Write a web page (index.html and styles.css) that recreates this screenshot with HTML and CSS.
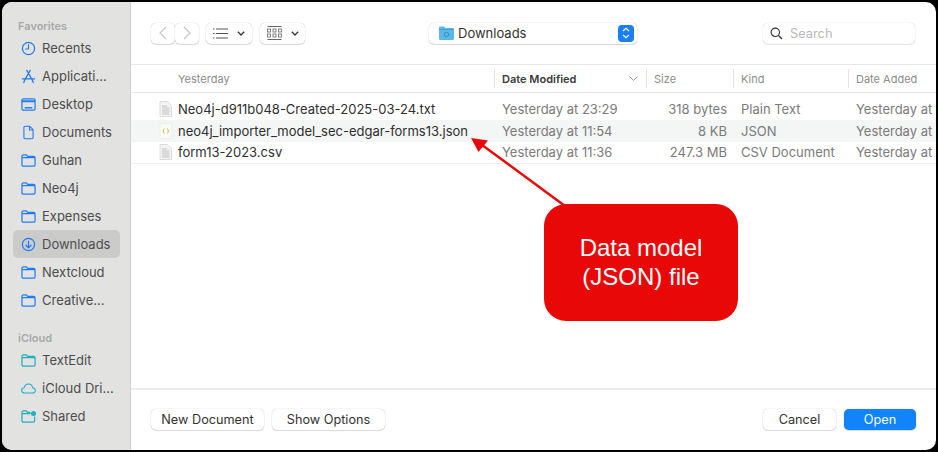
FILE: index.html
```html
<!DOCTYPE html>
<html lang="en">
<head>
    <meta charset="UTF-8">
    <meta name="viewport" content="width=device-width, initial-scale=1.0">
    <title>Open</title>
    <link rel="stylesheet" href="styles.css">
</head>
<body>
    <svg width="0" height="0" class="defs">
        <symbol id="folder" viewBox="0 0 16 14"><path d="M1 4V2.600C1 1.700 1.600 1 2.500 1H5.600L7.200 2.700H13.500C14.400 2.700 15 3.300 15 4.200V11.500C15 12.400 14.400 13 13.500 13H2.500C1.600 13 1 12.400 1 11.500V4H15" fill="none" stroke="currentColor" stroke-width="1.300"/></symbol>
        <symbol id="doc" viewBox="0 0 14 18"><path d="M3 1.500H8.500L12.500 5.700V15C12.500 16 11.900 16.500 11 16.500H3C2.100 16.500 1.500 16 1.500 15V3C1.500 2 2.100 1.500 3 1.500ZM8.300 1.700V5.900H12.300" fill="none" stroke="currentColor" stroke-width="1.300"/></symbol>
        <symbol id="filedoc" viewBox="0 0 13 16"><path d="M1 .5H8.500L12.500 4.500V15.500H1Z" fill="#f4f4f4" stroke="#dcdcdc"/><path d="M3 5H8M3 7H10.500M3 9H10.500M3 11H10.500M3 13H10.500" stroke="#b5b5b5" stroke-width=".8"/></symbol>
    </svg>

    <div class="window">
        <aside class="sidebar">
            <div class="side-title">Favorites</div>
            <div class="side-item">
                <svg class="side-icon" viewBox="0 0 16 16"><circle cx="8" cy="8" r="6.500" fill="none" stroke="currentColor" stroke-width="1.300"/><path d="M8 3.500V8.500H4.500" fill="none" stroke="currentColor" stroke-width="1.200"/></svg>
                Recents
            </div>
            <div class="side-item">
                <svg class="side-icon" viewBox="0 0 16 16"><path d="M9.800 1.500L3.500 12.500M6.200 1.500L12.500 12.500M1.500 10.500H14.500M3 14.500L3.800 12.500M13 14.500L12.200 12.500" fill="none" stroke="currentColor" stroke-width="1.400" stroke-linecap="round"/></svg>
                Applicati...
            </div>
            <div class="side-item">
                <svg class="side-icon" viewBox="0 0 16 14"><rect x="1" y="1" width="14" height="12" rx="1.500" fill="none" stroke="currentColor" stroke-width="1.300"/><path d="M1 3.500H15" stroke="currentColor" stroke-width="2"/><path d="M4 10.500H12" stroke="currentColor" stroke-width="1.500"/></svg>
                Desktop
            </div>
            <div class="side-item">
                <svg class="side-icon" viewBox="0 0 14 18"><use href="#doc"/></svg>
                Documents
            </div>
            <div class="side-item"><svg class="side-icon"><use href="#folder"/></svg>Guhan</div>
            <div class="side-item"><svg class="side-icon"><use href="#folder"/></svg>Neo4j</div>
            <div class="side-item"><svg class="side-icon"><use href="#folder"/></svg>Expenses</div>
            <div class="side-item active">
                <svg class="side-icon" viewBox="0 0 16 16"><circle cx="8" cy="8" r="6.500" fill="none" stroke="currentColor" stroke-width="1.300"/><path d="M8 4V11.500M5 8.500L8 11.500L11 8.500" fill="none" stroke="currentColor" stroke-width="1.300"/></svg>
                Downloads
            </div>
            <div class="side-item"><svg class="side-icon"><use href="#folder"/></svg>Nextcloud</div>
            <div class="side-item"><svg class="side-icon"><use href="#folder"/></svg>Creative...</div>

            <div class="side-title cloud">iCloud</div>
            <div class="side-item teal"><svg class="side-icon"><use href="#folder"/></svg>TextEdit</div>
            <div class="side-item teal">
                <svg class="side-icon" viewBox="0 0 16 12"><path d="M4 10.800C2 10.800 .7 9.600 .7 8C.7 6.500 1.800 5.400 3.300 5.300C4 3 5.700 1.300 8 1.300C10.300 1.300 12 3 12.300 5.200C14 5.400 15.300 6.500 15.300 8C15.300 9.700 14 10.800 12.300 10.800Z" fill="none" stroke="currentColor" stroke-width="1.100"/></svg>
                iCloud Dri...
            </div>
            <div class="side-item teal">
                <svg class="side-icon" viewBox="0 0 16 14"><path d="M1 4V2.600C1 1.700 1.600 1 2.500 1H5.600L7 2.700H10M14.500 7V11.500C14.500 12.400 13.900 13 13 13H2.500C1.600 13 1 12.400 1 11.500V4H10" fill="none" stroke="currentColor" stroke-width="1.300"/><circle cx="13.300" cy="3.800" r="2.700" fill="currentColor"/></svg>
                Shared
            </div>
        </aside>

        <main class="main">
            <div class="toolbar">
                <div class="nav-pair">
                    <span class="tool-btn nav-btn"><svg width="8" height="14" viewBox="0 0 8 14"><path d="M7 1L1 7L7 13" fill="none" stroke="#c4c4c4" stroke-width="1.100"/></svg></span>
                    <span class="tool-btn nav-btn"><svg width="8" height="14" viewBox="0 0 8 14"><path d="M1 1L7 7L1 13" fill="none" stroke="#c4c4c4" stroke-width="1.100"/></svg></span>
                </div>
                <span class="tool-btn view-btn">
                    <svg width="15" height="11" viewBox="0 0 15 11"><path d="M3 1H15M3 5.500H15M3 10H15" stroke="#555" stroke-width="1"/><path d="M0 1H1.500M0 5.500H1.500M0 10H1.500" stroke="#555" stroke-width="1.200"/></svg>
                    <svg class="chev" width="8" height="5" viewBox="0 0 8 5"><path d="M.8 .8L4 4L7.200 .8" fill="none" stroke="#333" stroke-width="1.300"/></svg>
                </span>
                <span class="tool-btn view-btn grid-btn">
                    <svg width="15" height="14" viewBox="0 0 15 14"><path d="M.5 .5H14.500" stroke="#666"/><path d="M.5 13.500H14.500" stroke="#666"/><g fill="none" stroke="#666" stroke-width=".8"><rect x=".5" y="3" width="3" height="3"/><rect x="6" y="3" width="3" height="3"/><rect x="11.500" y="3" width="3" height="3"/><rect x=".5" y="8" width="3" height="3"/><rect x="6" y="8" width="3" height="3"/><rect x="11.500" y="8" width="3" height="3"/></g></svg>
                    <svg class="chev" width="8" height="5" viewBox="0 0 8 5"><path d="M.8 .8L4 4L7.200 .8" fill="none" stroke="#333" stroke-width="1.300"/></svg>
                </span>
                <div class="location">
                    <svg width="15" height="14" viewBox="0 0 15 14"><path d="M0 2C0 1 .6 .5 1.500 .5H5L6.500 2H13.500C14.400 2 15 2.600 15 3.500V12.500C15 13.400 14.400 14 13.500 14H1.500C.6 14 0 13.400 0 12.500Z" fill="#5cb8e6"/><path d="M0 3.500H15" stroke="#3a9fd8"/><circle cx="7.500" cy="8.500" r="2.200" fill="none" stroke="#2f8fc8" stroke-width="1"/></svg>
                    <span class="location-name">Downloads</span>
                    <span class="stepper"><svg width="8" height="12" viewBox="0 0 8 12"><path d="M1 4L4 1.300L7 4M1 8L4 10.700L7 8" fill="none" stroke="#fff" stroke-width="1.300"/></svg></span>
                </div>
                <div class="search">
                    <svg width="13" height="13" viewBox="0 0 14 14"><circle cx="5.700" cy="5.700" r="4.500" fill="none" stroke="#333" stroke-width="1.200"/><path d="M9 9L13 13" stroke="#333" stroke-width="1.400"/></svg>
                    <span class="search-text">Search</span>
                </div>
            </div>

            <div class="list-head">
                <span class="col col-name">Yesterday</span>
                <span class="col col-sep col-sorted">Date Modified
                    <svg width="9" height="5" viewBox="0 0 9 5"><path d="M.5 .5L4.500 4.500L8.500 .5" fill="none" stroke="#999" stroke-width="1"/></svg>
                </span>
                <span class="col col-sep">Size</span>
                <span class="col col-sep">Kind</span>
                <span class="col col-sep">Date Added</span>
            </div>

            <div class="list">
                <div class="row">
                    <span class="cell cell-name"><svg class="file-icon"><use href="#filedoc"/></svg>Neo4j-d911b048-Created-2025-03-24.txt</span>
                    <span class="cell muted">Yesterday at 23:29</span>
                    <span class="cell muted cell-size">318 bytes</span>
                    <span class="cell muted">Plain Text</span>
                    <span class="cell muted">Yesterday at 1</span>
                </div>
                <div class="row stripe">
                    <span class="cell cell-name"><svg class="file-icon" viewBox="0 0 13 16"><path d="M1 .5H12.500V15.500H1Z" fill="#fbfbf6" stroke="#eeeeee"/><path d="M5.200 5.500C4 6.500 4 9.500 5.200 10.500M8.300 5.500C9.500 6.500 9.500 9.500 8.300 10.500" fill="none" stroke="#c9b93a" stroke-width="1"/></svg>neo4j_importer_model_sec-edgar-forms13.json</span>
                    <span class="cell muted">Yesterday at 11:54</span>
                    <span class="cell muted cell-size">8 KB</span>
                    <span class="cell muted">JSON</span>
                    <span class="cell muted">Yesterday at 1</span>
                </div>
                <div class="row last">
                    <span class="cell cell-name"><svg class="file-icon"><use href="#filedoc"/></svg>form13-2023.csv</span>
                    <span class="cell muted">Yesterday at 11:36</span>
                    <span class="cell muted cell-size">247.3 MB</span>
                    <span class="cell muted">CSV Document</span>
                    <span class="cell muted">Yesterday at 1</span>
                </div>
            </div>

            <div class="footer">
                <button class="btn">New Document</button>
                <button class="btn">Show Options</button>
                <span class="spacer"></span>
                <button class="btn btn-cancel">Cancel</button>
                <button class="btn btn-open">Open</button>
            </div>
        </main>
    </div>

    <!-- annotation laid over the dialog -->
    <svg class="arrow" width="110" height="80" viewBox="0 0 110 80">
        <path d="M95 69L8 5" stroke="#e80808" stroke-width="2.500"/>
        <path d="M1 1L18 3.500L8.500 15Z" fill="#e80808"/>
    </svg>
    <div class="callout">Data model<br>(JSON) file</div>
</body>
</html>
```

FILE: styles.css
```css
* {
    box-sizing: border-box;
}

body {
    margin: 0;
    width: 938px;
    height: 452px;
    padding: 2px;
    overflow: hidden;
    background-color: #000;
    font-family: Inter, "Liberation Sans", sans-serif;
    font-size: 13px;
    color: #333;
}

.defs {
    position: absolute;
}

.window {
    display: flex;
    height: 448px;
    border-radius: 10px;
    overflow: hidden;
    background-color: #fff;
}

.sidebar {
    width: 129px;
    flex-shrink: 0;
    padding: 16px 10px 0 11px;
    background-color: #e2e2e1;
    border-right: 1px solid #cfcfcf;
}

.side-title {
    height: 16px;
    line-height: 16px;
    padding-left: 5px;
    font-size: 11px;
    font-weight: 600;
    color: #a9a9a9;
}

.side-title.cloud {
    margin-top: 16px;
}

.side-item {
    display: flex;
    align-items: center;
    height: 28px;
    padding: 0 0 1px 8px;
    gap: 6px;
    font-size: 13px;
    color: #4d4d4d;
    white-space: nowrap;
}

.side-item.active {
    background-color: #cbcbca;
    border-radius: 5px;
}

.side-icon {
    width: 15px;
    height: 15px;
    flex-shrink: 0;
    margin-top: 1px;
    color: #1f7cf5;
}

.teal .side-icon {
    color: #22aec4;
}

.main {
    flex: 1;
    display: flex;
    flex-direction: column;
    min-width: 0;
}

.toolbar {
    display: flex;
    align-items: center;
    height: 63px;
    flex-shrink: 0;
    padding: 0 21px 0 20px;
    border-bottom: 1px solid #e6e6e6;
}

.nav-pair {
    display: flex;
    margin-right: 7px;
}

.tool-btn {
    display: flex;
    align-items: center;
    justify-content: center;
    height: 21px;
    background-color: #fff;
    border-radius: 5px;
    box-shadow: 0 0 1px rgba(0, 0, 0, 0.35), 0 1px 1px rgba(0, 0, 0, 0.12);
}

.nav-btn {
    width: 24px;
}

.view-btn {
    width: 46px;
    gap: 9px;
    margin-right: 8px;
}

.grid-btn {
    width: 45px;
    margin-right: 0;
}

.location {
    display: flex;
    align-items: center;
    width: 208px;
    height: 21px;
    margin-left: 124px;
    padding: 0 3px 0 10px;
    background-color: #fff;
    border-radius: 5px;
    box-shadow: 0 0 1px rgba(0, 0, 0, 0.35), 0 1px 1px rgba(0, 0, 0, 0.12);
}

.location-name {
    flex: 1;
    margin-left: 4px;
    font-size: 13px;
}

.stepper {
    display: flex;
    align-items: center;
    justify-content: center;
    width: 16px;
    height: 17px;
    background-color: #1a7ff0;
    border-radius: 4px;
}

.search {
    display: flex;
    align-items: center;
    gap: 7px;
    width: 152px;
    height: 21px;
    margin-left: auto;
    padding-left: 7px;
    background-color: #fff;
    border-radius: 5px;
    box-shadow: 0 0 1px rgba(0, 0, 0, 0.3), 0 1px 1px rgba(0, 0, 0, 0.08);
}

.search-text {
    font-size: 12.8px;
    color: #b9b9b9;
}

.list-head,
.row {
    display: grid;
    grid-template-columns: 363px 152px 87px 115px 1fr;
}

.list-head {
    height: 28px;
    flex-shrink: 0;
    align-items: center;
    font-size: 11px;
    color: #8c8c8c;
    border-bottom: 1px solid #e6e6e6;
}

.col {
    display: flex;
    align-items: center;
    justify-content: space-between;
    height: 19px;
    padding-left: 7px;
    white-space: nowrap;
}

.col-name {
    padding-left: 47px;
}

.col-sep {
    border-left: 1px solid #e4e4e4;
}

.col-sorted {
    padding-right: 8px;
    font-weight: 600;
    color: #3a3a3a;
}

.list {
    flex: 1;
    padding-top: 5px;
    overflow: hidden;
}

.row {
    height: 22px;
    align-items: center;
    font-size: 13px;
    white-space: nowrap;
    overflow: hidden;
}

.stripe {
    background-color: #f4f5f5;
}

.last {
    border-bottom: 1px solid #eeeeee;
}

.cell {
    padding: 0 0 1px 8px;
    overflow: hidden;
}

.cell-name {
    display: flex;
    align-items: center;
    padding-left: 28px;
    color: #2f2f2f;
}

.file-icon {
    width: 13px;
    height: 16px;
    flex-shrink: 0;
    margin-right: 6px;
}

.muted {
    color: #7b7b7b;
}

.cell-size {
    padding: 0 6px 1px 0;
    text-align: right;
}

.footer {
    display: flex;
    align-items: center;
    gap: 8px;
    height: 62px;
    flex-shrink: 0;
    padding: 0 20px 2px;
    border-top: 2px solid #ececec;
}

.spacer {
    flex: 1;
}

.btn {
    width: 113px;
    height: 21px;
    padding: 0;
    border: none;
    border-radius: 5px;
    background-color: #fff;
    box-shadow: 0 0 1px rgba(0, 0, 0, 0.35), 0 1px 1px rgba(0, 0, 0, 0.12);
    font-family: inherit;
    font-size: 12.7px;
    color: #333;
}

.btn-cancel {
    width: 73px;
}

.btn-open {
    width: 72px;
    background-color: #1184fb;
    color: #fff;
}

.arrow {
    position: absolute;
    left: 470px;
    top: 137px;
}

.callout {
    position: absolute;
    left: 544px;
    top: 204px;
    display: flex;
    align-items: center;
    justify-content: center;
    width: 194px;
    height: 117px;
    padding-bottom: 1px;
    background-color: #e80808;
    border-radius: 22px;
    font-family: "Liberation Sans", Arial, sans-serif;
    font-size: 24px;
    line-height: 29px;
    text-align: center;
    color: #fff;
}
```
